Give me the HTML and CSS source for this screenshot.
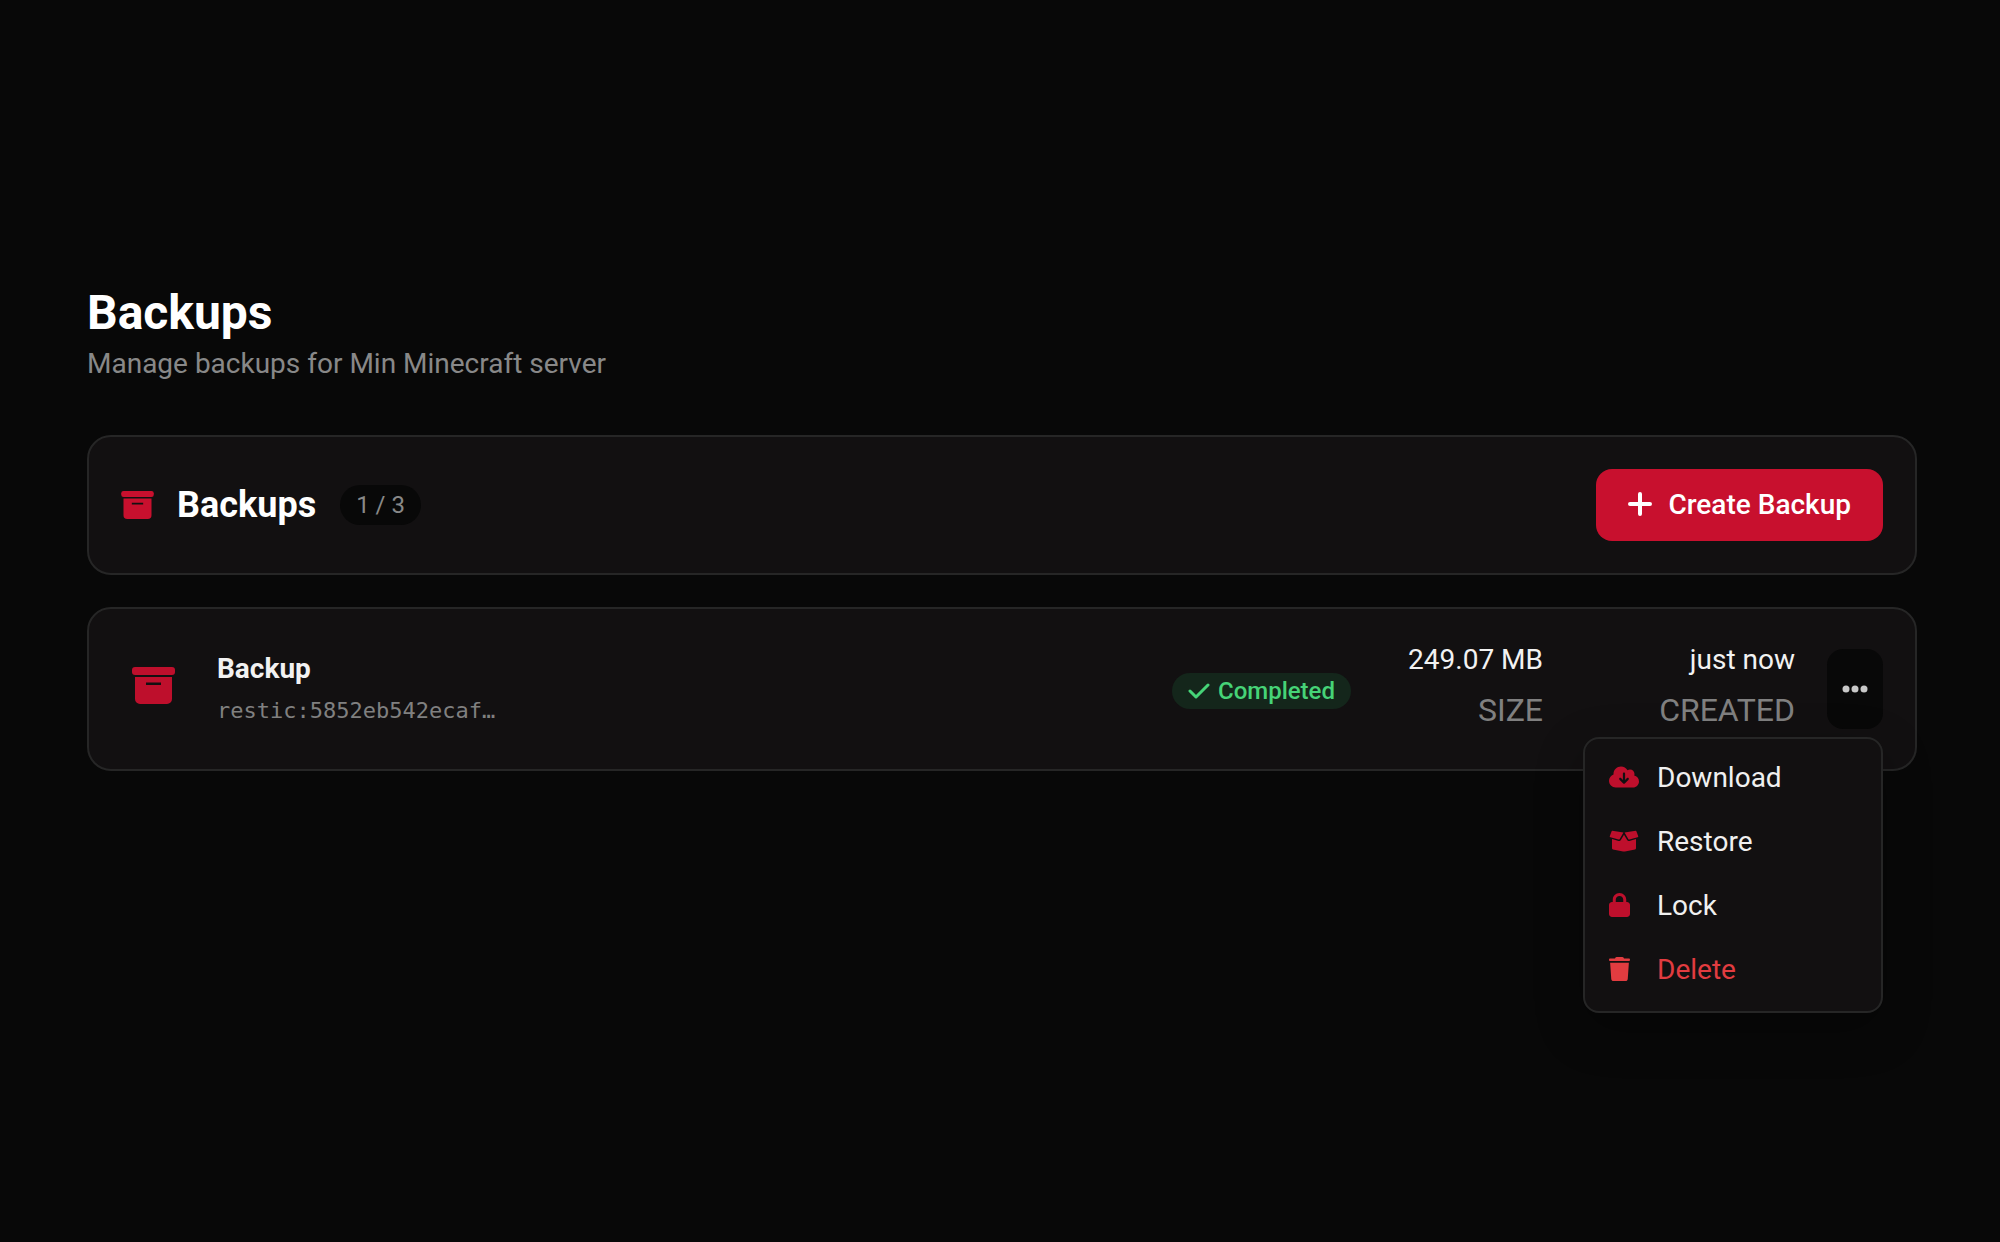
FILE: index.html
```html
<!DOCTYPE html>
<html lang="en">
<head>
  <meta charset="UTF-8">
  <meta name="viewport" content="width=device-width, initial-scale=1">
  <title>Backups</title>
  <link rel="stylesheet" href="styles.css">
</head>
<body>

<!-- shared icon shapes -->
<svg class="sprite" aria-hidden="true">
  <symbol id="archive" viewBox="0 0 43 37">
    <rect width="43" height="8" rx="3"/>
    <path fill-rule="evenodd" d="M3 10h37v22a5 5 0 0 1-5 5H8a5 5 0 0 1-5-5zM14 15.500v2.500h15v-2.500z"/>
  </symbol>
</svg>

<main class="page">
  <header class="page-header">
    <h1>Backups</h1>
    <p>Manage backups for Min Minecraft server</p>
  </header>

  <section class="card toolbar">
    <svg class="toolbar-icon"><use href="#archive"/></svg>
    <h2>Backups</h2>
    <span class="count">1 / 3</span>
    <button class="create" type="button">
      <svg class="plus" viewBox="0 0 24 24"><path d="M12 2v20M2 12h20"/></svg>
      Create Backup
    </button>
  </section>

  <article class="card backup">
    <svg class="backup-icon"><use href="#archive"/></svg>
    <div class="info">
      <h3>Backup</h3>
      <code>restic:5852eb542ecaf…</code>
    </div>
    <span class="status">
      <svg class="check" viewBox="0 0 22 16"><path d="M2 8l6 6L20 2"/></svg>
      Completed
    </span>
    <div class="stat size">
      <span class="value">249.07 MB</span>
      <span class="label">SIZE</span>
    </div>
    <div class="stat created">
      <span class="value">just now</span>
      <span class="label">CREATED</span>
    </div>
    <div class="actions">
      <button class="more" type="button" aria-label="Backup actions" aria-expanded="true">
        <svg viewBox="0 0 26 8"><circle cx="4" cy="4" r="3.500"/><circle cx="13" cy="4" r="3.500"/><circle cx="22" cy="4" r="3.500"/></svg>
      </button>
      <div class="menu">
        <button type="button">
          <svg class="wide" viewBox="0 0 640 512"><path fill-rule="evenodd" d="M144 480C64.500 480 0 415.500 0 336c0-62.800 40.200-116.200 96.200-135.900c-.1-2.700-.2-5.400-.2-8.100c0-88.400 71.600-160 160-160c59.300 0 111 32.200 138.700 80.200C409.900 102 428.300 96 448 96c53 0 96 43 96 96c0 12.200-2.300 23.800-6.400 34.600C596 238.400 640 290.100 640 352c0 70.700-57.300 128-128 128H144zm79-167l80 80c9.400 9.400 24.600 9.400 33.900 0l80-80c9.400-9.400 9.400-24.600 0-33.900s-24.600-9.400-33.900 0l-39 39V184c0-13.300-10.700-24-24-24s-24 10.700-24 24v134.100l-39-39c-9.400-9.400-24.600-9.400-33.900 0s-9.400 24.600 0 33.900z"/></svg>
          Download
        </button>
        <button type="button">
          <svg class="wide" viewBox="0 0 640 512"><path d="M70 38L308 72 226 216c-5 9-12 12-22 9L30 176c-14-4-18-13-12-26L56 48c3-7 7-11 14-10zM570 38L332 72l82 144c5 9 12 12 22 9l174-49c14-4 18-13 12-26L584 48c-3-7-7-11-14-10zM64 214l140 40c22 6 38 0 49-18l67-116 67 116c11 18 27 24 49 18l140-40v196c0 14-6 22-20 26l-216 44c-14 3-26 3-40 0L84 436c-14-4-20-12-20-26z"/></svg>
          Restore
        </button>
        <button type="button">
          <svg viewBox="0 0 448 512"><path fill-rule="evenodd" d="M144 144v48h160v-48c0-44-36-80-80-80s-80 36-80 80zM80 192v-48C80 64 144 0 224 0s144 64 144 144v48h16c35 0 64 29 64 64v192c0 35-29 64-64 64H64c-35 0-64-29-64-64V256c0-35 29-64 64-64z"/></svg>
          Lock
        </button>
        <button class="danger" type="button">
          <svg viewBox="0 0 448 512"><path d="M135 18c6-11 17-18 29-18h120c12 0 23 7 29 18l7 14h104c14 0 24 10 24 26s-10 26-24 26H24C10 84 0 74 0 58s10-26 24-26h104zM24 122h400l-24 345c-2 27-20 45-46 45H94c-26 0-44-18-46-45z"/></svg>
          Delete
        </button>
      </div>
    </div>
  </article>
</main>

</body>
</html>
```
FILE: styles.css
```css
* {
  box-sizing: border-box;
}
body {
  margin: 0;
  min-height: 100vh;
  background: #080808;
  color: #f2f2f2;
  font-family: Roboto, sans-serif;
  font-size: 28px;
}
h1, h2, h3, p {
  margin: 0;
}
h1, h2 {
  color: #fff;
}
button {
  border: none;
  font: inherit;
  cursor: pointer;
}
svg {
  display: block;
  flex: none;
  fill: currentColor;
}
.sprite {
  position: absolute;
  width: 0;
  height: 0;
}

.page {
  padding: 284px 83px 80px 87px;
}
.page-header {
  margin-bottom: 48px;
}
.page-header h1 {
  font-size: 48px;
  line-height: 58px;
}
.page-header p {
  padding: 2px 0 3px;
  line-height: 40px;
  color: #888;
}

.card {
  display: flex;
  align-items: center;
  padding: 0 32px;
  border: 2px solid #262626;
  border-radius: 24px;
  background: #121011;
}

/* top bar */
.toolbar {
  height: 140px;
  margin-bottom: 32px;
}
.toolbar-icon {
  width: 33px;
  height: 28px;
  margin-right: 23px;
  color: #c8102e;
}
.toolbar h2 {
  font-size: 36px;
}
.count {
  margin-left: 24px;
  padding: 0 16px;
  border-radius: 20px;
  background: #080808;
  color: #888;
  font-size: 24px;
  line-height: 40px;
}
.create {
  display: flex;
  align-items: center;
  gap: 16px;
  height: 72px;
  margin-left: auto;
  padding: 0 32px 2px;
  border-radius: 16px;
  background: #c8102e;
  color: #fff;
  font-weight: 500;
}
.plus {
  width: 24px;
  height: 24px;
  stroke: currentColor;
  stroke-width: 4;
  stroke-linecap: round;
}

/* backup row */
.backup {
  height: 164px;
}
.backup-icon {
  width: 43px;
  height: 37px;
  margin: 0 42px 8px 11px;
  color: #be0f2c;
}
.info {
  flex: 1;
  padding-top: 2px;
}
.info h3 {
  font-size: 28px;
  line-height: 42px;
}
.info code {
  display: block;
  color: #808080;
  font-family: "DejaVu Sans Mono", monospace;
  font-size: 22px;
  line-height: 42px;
}
.status {
  display: flex;
  align-items: center;
  gap: 8px;
  height: 36px;
  margin-top: 4px;
  padding: 0 16px;
  border-radius: 18px;
  background: #14261b;
  color: #46d377;
  font-size: 24px;
  font-weight: 500;
}
.check {
  width: 22px;
  height: 16px;
  fill: none;
  stroke: currentColor;
  stroke-width: 3;
  stroke-linecap: round;
  stroke-linejoin: round;
}
.stat {
  display: flex;
  flex-direction: column;
  padding-bottom: 8px;
  text-align: right;
}
.size {
  width: 192px;
}
.created {
  width: 252px;
}
.value {
  line-height: 50px;
}
.label {
  color: #808080;
  font-size: 32px;
  line-height: 50px;
}
.actions {
  position: relative;
  margin-left: 32px;
}
.more {
  display: grid;
  place-items: center;
  width: 56px;
  height: 80px;
  border-radius: 16px;
  background: #080808;
  color: #c8c8c8;
}
.more svg {
  width: 26px;
  height: 8px;
}

/* dropdown */
.menu {
  position: absolute;
  top: 100%;
  right: 0;
  width: 300px;
  margin-top: 8px;
  padding: 6px 8px 10px;
  border: 2px solid #262626;
  border-radius: 16px;
  background: #121011;
  box-shadow: 0 16px 48px rgba(0, 0, 0, 0.3);
}
.menu button {
  display: grid;
  grid-template-columns: 32px 1fr;
  align-items: center;
  gap: 16px;
  width: 100%;
  height: 64px;
  padding: 0 16px;
  background: none;
  color: #f0f0f0;
  text-align: left;
}
.menu svg {
  width: 21px;
  height: 24px;
  color: #be0f2c;
}
.menu .wide {
  width: 30px;
}
.menu .danger, .menu .danger svg {
  color: #e23c40;
}
```
